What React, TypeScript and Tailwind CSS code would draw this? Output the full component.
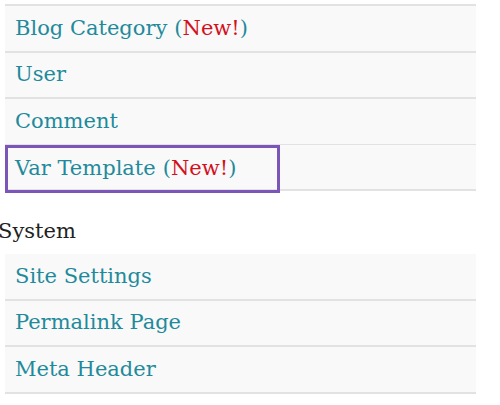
const GROUP1 = [
  { label: "Blog Category", isNew: true },
  { label: "User" },
  { label: "Comment" },
  { label: "Var Template", isNew: true, active: true },
];

const GROUP2 = [{ label: "Site Settings" }, { label: "Permalink Page" }, { label: "Meta Header" }];

type Item = { label: string; isNew?: boolean; active?: boolean };

function Row({ label, isNew, active }: Item) {
  return (
    <li className="h-[46.5px] border-b-2 border-[#e2e2e2] bg-[#f9f9f9]">
      <a
        className={
          active
            ? "flex h-[48px] w-[275px] -mt-[1px] items-center border-[3px] border-[#7b55b8] pl-[7px] text-[#1f8a9c]"
            : "flex h-full items-center pl-[10px] text-[#1f8a9c]"
        }
      >
        {label}
        {isNew && (
          <span className="ml-[7px]">
            (<span className="text-[#d3101d]">New!</span>)
          </span>
        )}
      </a>
    </li>
  );
}

export default function App() {
  return (
    <div className="h-[405px] w-[500px] overflow-hidden bg-white font-['DejaVu_Serif',serif] text-[21px] leading-none">
      <ul className="ml-[5px] w-[471px] border-t-2 border-[#e2e2e2] mt-[4px]">
        {GROUP1.map((i) => (
          <Row key={i.label} {...i} />
        ))}
      </ul>
      <h3 className="-ml-[2px] mt-[30px] text-[#222]">System</h3>
      <ul className="ml-[5px] mt-[12px] w-[471px]">
        {GROUP2.map((i) => (
          <Row key={i.label} {...i} />
        ))}
      </ul>
    </div>
  );
}
